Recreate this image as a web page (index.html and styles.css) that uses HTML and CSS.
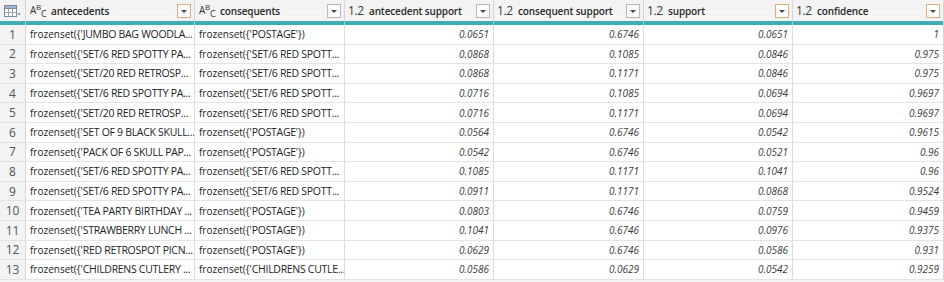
FILE: index.html
```html
<!DOCTYPE html>
<html>
<head>
<meta charset="utf-8">
<link rel="stylesheet" href="styles.css">
</head>
<body>
<div class="grid">
  <div class="hd corner">
    <svg width="18" height="14" viewBox="0 0 18 14">
      <rect x="1.5" y="1.5" width="12" height="11" fill="#fff" stroke="#7a8a9a"/>
      <rect x="1.5" y="1.5" width="12" height="3" fill="#9fb7cf" stroke="#7a8a9a"/>
      <line x1="5.5" y1="4.5" x2="5.5" y2="12.5" stroke="#9aa6b2"/>
      <line x1="9.5" y1="4.5" x2="9.5" y2="12.5" stroke="#9aa6b2"/>
      <line x1="1.5" y1="8.5" x2="13.5" y2="8.5" stroke="#9aa6b2"/>
      <path d="M14.5 9.5 L17.5 9.5 L16 11 Z" fill="#444"/>
    </svg>
  </div>
  <div class="hd"><span class="abc">A<sup>B</sup><sub>C</sub></span><span class="lbl">antecedents</span><span class="dots"></span><span class="btn hot"></span></div>
  <div class="hd"><span class="abc">A<sup>B</sup><sub>C</sub></span><span class="lbl">consequents</span><span class="dots"></span><span class="btn"></span></div>
  <div class="hd"><span class="num">1.2</span><span class="lbl">antecedent support</span><span class="dots"></span><span class="btn"></span></div>
  <div class="hd"><span class="num">1.2</span><span class="lbl">consequent support</span><span class="dots"></span><span class="btn"></span></div>
  <div class="hd"><span class="num">1.2</span><span class="lbl">support</span><span class="dots"></span><span class="btn hot"></span></div>
  <div class="hd last"><span class="num">1.2</span><span class="lbl">confidence</span><span class="dots"></span><span class="btn hot"></span></div>

  <div class="bar"></div><div class="bar"></div><div class="bar"></div><div class="bar"></div><div class="bar"></div><div class="bar"></div><div class="bar last"></div>

  <div class="rn">1</div><div class="c">frozenset({'<span class="u">JUMBO BAG WOODLA...</span></div><div class="c">frozenset({'<span class="u">POSTAGE</span>'})</div><div class="c n">0.0651</div><div class="c n">0.6746</div><div class="c n">0.0651</div><div class="c n last">1</div>
  <div class="rn">2</div><div class="c">frozenset({'<span class="u">SET/6 RED SPOTTY PA...</span></div><div class="c">frozenset({'<span class="u">SET/6 RED SPOTT...</span></div><div class="c n">0.0868</div><div class="c n">0.1085</div><div class="c n">0.0846</div><div class="c n last">0.975</div>
  <div class="rn">3</div><div class="c">frozenset({'<span class="u">SET/20 RED RETROSP...</span></div><div class="c">frozenset({'<span class="u">SET/6 RED SPOTT...</span></div><div class="c n">0.0868</div><div class="c n">0.1171</div><div class="c n">0.0846</div><div class="c n last">0.975</div>
  <div class="rn">4</div><div class="c">frozenset({'<span class="u">SET/6 RED SPOTTY PA...</span></div><div class="c">frozenset({'<span class="u">SET/6 RED SPOTT...</span></div><div class="c n">0.0716</div><div class="c n">0.1085</div><div class="c n">0.0694</div><div class="c n last">0.9697</div>
  <div class="rn">5</div><div class="c">frozenset({'<span class="u">SET/20 RED RETROSP...</span></div><div class="c">frozenset({'<span class="u">SET/6 RED SPOTT...</span></div><div class="c n">0.0716</div><div class="c n">0.1171</div><div class="c n">0.0694</div><div class="c n last">0.9697</div>
  <div class="rn">6</div><div class="c">frozenset({'<span class="u">SET OF 9 BLACK SKULL...</span></div><div class="c">frozenset({'<span class="u">POSTAGE</span>'})</div><div class="c n">0.0564</div><div class="c n">0.6746</div><div class="c n">0.0542</div><div class="c n last">0.9615</div>
  <div class="rn">7</div><div class="c">frozenset({'<span class="u">PACK OF 6 SKULL PAP...</span></div><div class="c">frozenset({'<span class="u">POSTAGE</span>'})</div><div class="c n">0.0542</div><div class="c n">0.6746</div><div class="c n">0.0521</div><div class="c n last">0.96</div>
  <div class="rn">8</div><div class="c">frozenset({'<span class="u">SET/6 RED SPOTTY PA...</span></div><div class="c">frozenset({'<span class="u">SET/6 RED SPOTT...</span></div><div class="c n">0.1085</div><div class="c n">0.1171</div><div class="c n">0.1041</div><div class="c n last">0.96</div>
  <div class="rn">9</div><div class="c">frozenset({'<span class="u">SET/6 RED SPOTTY PA...</span></div><div class="c">frozenset({'<span class="u">SET/6 RED SPOTT...</span></div><div class="c n">0.0911</div><div class="c n">0.1171</div><div class="c n">0.0868</div><div class="c n last">0.9524</div>
  <div class="rn">10</div><div class="c">frozenset({'<span class="u">TEA PARTY BIRTHDAY ...</span></div><div class="c">frozenset({'<span class="u">POSTAGE</span>'})</div><div class="c n">0.0803</div><div class="c n">0.6746</div><div class="c n">0.0759</div><div class="c n last">0.9459</div>
  <div class="rn">11</div><div class="c">frozenset({'<span class="u">STRAWBERRY LUNCH ...</span></div><div class="c">frozenset({'<span class="u">POSTAGE</span>'})</div><div class="c n">0.1041</div><div class="c n">0.6746</div><div class="c n">0.0976</div><div class="c n last">0.9375</div>
  <div class="rn">12</div><div class="c">frozenset({'<span class="u">RED RETROSPOT PICN...</span></div><div class="c">frozenset({'<span class="u">POSTAGE</span>'})</div><div class="c n">0.0629</div><div class="c n">0.6746</div><div class="c n">0.0586</div><div class="c n last">0.931</div>
  <div class="rn">13</div><div class="c">frozenset({'<span class="u">CHILDRENS CUTLERY ...</span></div><div class="c">frozenset({'<span class="u">CHILDRENS CUTLE...</span></div><div class="c n">0.0586</div><div class="c n">0.0629</div><div class="c n">0.0542</div><div class="c n last">0.9259</div>
</div>
</body>
</html>
```

FILE: styles.css
```css
html, body {
  margin: 0;
  padding: 0;
  background: #f3f3f3;
}
body {
  font-family: "Open Sans", "Noto Sans", sans-serif;
  width: 944px;
  height: 282px;
  overflow: hidden;
}
.grid {
  display: grid;
  grid-template-columns: 26px 169px 150px 149px 150px 149px 150px;
  grid-template-rows: 21px 4px repeat(13, 19.6px);
  background: #fff;
  width: 943px;
  border-right: 1px solid #d6d6d6;
}
.hd {
  background: #f3f3f3;
  border-right: 1px solid #d6d6d6;
  display: flex;
  align-items: center;
  padding: 0 3px 0 3px;
  font-size: 10px;
  font-weight: 600;
  letter-spacing: -0.15px;
  color: #2a2a2a;
  overflow: hidden;
}
.hd.last { border-right: none; }
.corner { padding: 0 0 0 3px; }
.abc {
  font-size: 10px;
  font-weight: 400;
  letter-spacing: -0.3px;
  color: #333;
  line-height: 1;
  width: 20px;
  padding-left: 1px;
}
.abc sup { font-size: 8px; vertical-align: 4px; }
.abc sub { font-size: 9px; vertical-align: -3px; }
.num {
  font-size: 12px;
  font-weight: 400;
  color: #3a3a3a;
  width: 20px;
  letter-spacing: -0.4px;
}
.lbl {
  white-space: nowrap;
  padding-left: 1px;
}
.dots {
  flex: 1;
  height: 0;
  margin: 3px 6px 0 6px;
  border-bottom: 1px dotted #fdfdfd;
}
.btn {
  width: 12px;
  height: 12px;
  border: 1px solid #b8b8b8;
  background: #fbfbfb;
  position: relative;
  flex: none;
}
.btn.hot { border-color: #d7b17c; }
.btn::after {
  content: "";
  position: absolute;
  left: 3px;
  top: 5px;
  border-left: 3px solid transparent;
  border-right: 3px solid transparent;
  border-top: 3px solid #4a4a4a;
}
.bar {
  background: #3fadb3;
  border-right: 1px solid #9ad3d6;
}
.bar.last { border-right: none; }
.rn {
  background: #f3f3f3;
  border-right: 1px solid #d6d6d6;
  border-bottom: 1px solid #e2e2e2;
  color: #555;
  font-size: 12px;
  display: flex;
  align-items: center;
  justify-content: center;
}
.c {
  border-right: 1px solid #dcdcdc;
  border-bottom: 1px solid #e4e4e4;
  font-size: 10px;
  color: #222;
  display: flex;
  align-items: center;
  padding: 0 2px 0 4px;
  white-space: pre;
  overflow: hidden;
}
.u {
  font-size: 10.5px;
  letter-spacing: -0.3px;
}
.c.last { border-right: none; }
.n {
  justify-content: flex-end;
  font-style: italic;
  color: #3c3c3c;
  padding-right: 4px;
}
```
